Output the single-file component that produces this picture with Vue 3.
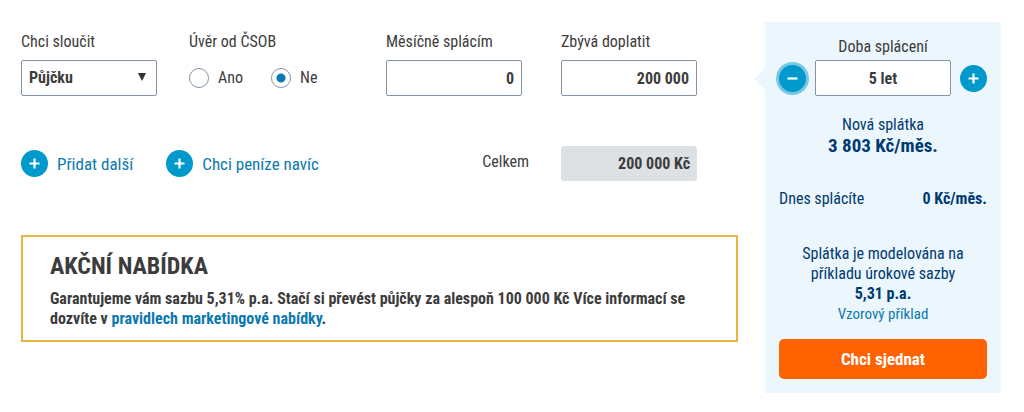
<template>
  <div class="calculator">
    <form class="loans" @submit.prevent>
      <div class="loan-row">
        <div class="field">
          <label for="loan-type">Chci sloučit</label>
          <div class="select-wrap">
            <select id="loan-type" v-model="loanType" class="control">
              <option value="loan">Půjčku</option>
              <option value="card">Kreditku</option>
              <option value="overdraft">Kontokorent</option>
            </select>
            <svg class="arrow" viewBox="0 0 8 8"><path d="M0 0h8L4 8z" /></svg>
          </div>
        </div>

        <fieldset class="field">
          <legend>Úvěr od ČSOB</legend>
          <div class="radios">
            <label><input v-model="fromCsob" type="radio" name="csob" value="yes" /> Ano</label>
            <label><input v-model="fromCsob" type="radio" name="csob" value="no" /> Ne</label>
          </div>
        </fieldset>

        <div class="field">
          <label for="monthly">Měsíčně splácím</label>
          <input id="monthly" v-model="monthly" class="control" type="text" />
        </div>

        <div class="field">
          <label for="remaining">Zbývá doplatit</label>
          <input id="remaining" v-model="remaining" class="control" type="text" />
        </div>
      </div>

      <div class="summary-row">
        <div class="actions">
          <button v-for="action in actions" :key="action" type="button" class="add-btn">
            <span class="circle">
              <svg viewBox="0 0 11 11"><path d="M5.5 0.5v10M0.5 5.5h10" /></svg>
            </span>
            {{ action }}
          </button>
        </div>
        <span class="total-label">Celkem</span>
        <output class="total">{{ remaining }} Kč</output>
      </div>

      <section class="promo">
        <h2>AKČNÍ NABÍDKA</h2>
        <p>
          Garantujeme vám sazbu 5,31% p.a. Stačí si převést půjčky za alespoň 100 000 Kč Více informací se
          dozvíte v <a href="#">pravidlech marketingové nabídky</a>.
        </p>
      </section>
    </form>

    <aside class="result">
      <label for="years">Doba splácení</label>
      <div class="stepper">
        <button type="button" class="circle active" aria-label="Méně" @click="changeYears(-1)">
          <svg viewBox="0 0 11 11"><path d="M0.5 5.5h10" /></svg>
        </button>
        <input id="years" class="control" type="text" :value="years + ' let'" readonly />
        <button type="button" class="circle" aria-label="Více" @click="changeYears(1)">
          <svg viewBox="0 0 11 11"><path d="M5.5 0.5v10M0.5 5.5h10" /></svg>
        </button>
      </div>

      <div class="payment">
        <span>Nová splátka</span>
        <strong>3 803 Kč/měs.</strong>
      </div>

      <div class="today">
        <span>Dnes splácíte</span>
        <strong>{{ monthly }} Kč/měs.</strong>
      </div>

      <div class="example">
        <p>Splátka je modelována na příkladu úrokové sazby <strong>5,31 p.a.</strong></p>
        <a href="#">Vzorový příklad</a>
      </div>

      <button type="button" class="submit">Chci sjednat</button>
    </aside>
  </div>
</template>

<script setup>
import { ref } from 'vue';

const loanType = ref('loan');
const fromCsob = ref('no');
const monthly = ref('0');
const remaining = ref('200 000');
const years = ref(5);

const actions = ['Přidat další', 'Chci peníze navíc'];

const changeYears = (step) => {
  years.value = Math.min(8, Math.max(5, years.value + step));
};
</script>

<style>
body {
  background: #fff;
}
</style>

<style scoped>
.calculator {
  display: flex;
  align-items: flex-start;
  gap: 27px;
  padding: 22px 23px 0 21px;
  font-family: "Roboto Condensed", "Liberation Sans Narrow", Roboto, sans-serif;
  font-size: 16px;
  line-height: 20px;
  color: #3c3c3c;
}

*,
*::before {
  box-sizing: border-box;
}

button,
input,
select {
  font: inherit;
  color: inherit;
  margin: 0;
}

button {
  border: none;
  padding: 0;
  cursor: pointer;
}

a {
  color: #0c79ae;
  text-decoration: none;
}

.loans {
  flex: 1;
  min-width: 0;
  padding-top: 10px;
}

.loan-row {
  display: grid;
  grid-template-columns: 168fr 197fr 175fr 177fr;
}

.field {
  display: flex;
  flex-direction: column;
  gap: 8px;
  min-width: 0;
  margin: 0;
  padding: 0;
  border: none;
  white-space: nowrap;
}

fieldset.field {
  display: block;
}

legend {
  padding: 0;
  margin-bottom: 8px;
}

.control {
  width: 136px;
  height: 36px;
  padding: 0 7px;
  border: 1px solid #8593a5;
  border-radius: 2px;
  background: #fff;
  font-weight: 700;
  text-align: right;
  outline: none;
}

.select-wrap {
  position: relative;
  width: 136px;
}

select.control {
  appearance: none;
  text-align: left;
}

.arrow {
  position: absolute;
  top: 13px;
  right: 11px;
  width: 8px;
  height: 8px;
  fill: #333;
  pointer-events: none;
}

.radios {
  display: flex;
  gap: 28px;
  height: 36px;
}

.radios label {
  display: flex;
  align-items: center;
  gap: 9px;
}

.radios input {
  appearance: none;
  width: 20px;
  height: 20px;
  border: 1px solid #8593a5;
  border-radius: 50%;
  background: #fff;
}

.radios input:checked {
  background: radial-gradient(circle, #0c79ae 4px, #fff 5px);
}

.summary-row {
  display: flex;
  align-items: center;
  margin: 50px 41px 54px 0;
}

.actions {
  display: flex;
  gap: 33px;
  flex: 1;
}

.add-btn {
  display: flex;
  align-items: center;
  gap: 9px;
  background: none;
  color: #0c79ae;
  font-size: 17px;
  white-space: nowrap;
}

.circle {
  display: flex;
  flex-shrink: 0;
  align-items: center;
  justify-content: center;
  width: 27px;
  height: 27px;
  border-radius: 50%;
  background: #0099cc;
}

.circle svg {
  width: 11px;
  height: 11px;
  fill: none;
  stroke: #fff;
  stroke-width: 2.2;
}

.circle.active {
  box-shadow: 0 0 0 3px #78c7e4;
}

.total-label {
  margin-right: 32px;
  padding-bottom: 3px;
}

.total {
  width: 136px;
  padding: 8px 7px 7px;
  border-radius: 3px;
  background: #dde1e4;
  font-weight: 700;
  text-align: right;
}

.promo {
  padding: 15px 27px 11px;
  border: 2px solid #e8b640;
}

.promo h2 {
  margin: 0 0 9px;
  font-size: 24px;
  line-height: 28px;
}

.promo p {
  margin: 0;
  font-weight: 700;
}

.result {
  position: relative;
  display: flex;
  flex-direction: column;
  width: 236px;
  padding: 15px 14px 14px;
  background: #ebf6fd;
  text-align: center;
}

.result::before {
  content: '';
  position: absolute;
  top: 46px;
  left: -11px;
  border: solid transparent;
  border-width: 11px 11px 11px 0;
  border-right-color: #ebf6fd;
}

.stepper {
  display: flex;
  align-items: center;
  gap: 9px;
  margin-top: 3px;
}

.stepper .control {
  flex: 1;
  min-width: 0;
  text-align: center;
}

.payment,
.today,
.example {
  color: #003a70;
}

.payment {
  display: flex;
  flex-direction: column;
  margin-top: 19px;
}

.payment strong {
  font-size: 19px;
  line-height: 22px;
}

.today {
  display: flex;
  justify-content: space-between;
  margin: 32px 0 35px;
}

.example p {
  margin: 0 20px;
}

.example strong {
  display: block;
}

.example a {
  display: block;
  font-size: 15px;
}

.submit {
  height: 40px;
  margin-top: 15px;
  border-radius: 5px;
  background: #ff6200;
  color: #fff;
  font-size: 17px;
  font-weight: 700;
}
</style>
